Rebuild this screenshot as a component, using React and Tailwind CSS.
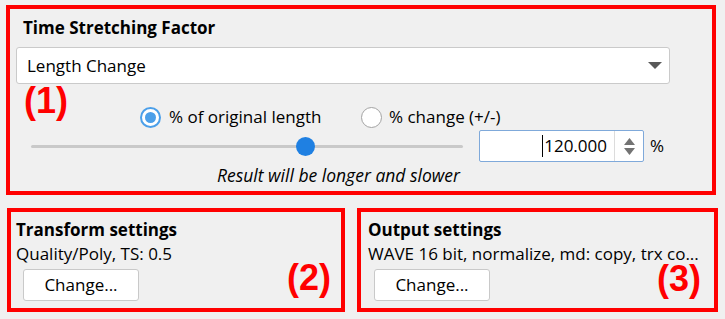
import React from 'react';

const font = { fontFamily: '"Open Sans", "Noto Sans", sans-serif' };

const Radio = ({ checked }) =>
  checked ? (
    <span className="w-[21px] h-[21px] rounded-full border-2 border-[#4b9fe9] bg-white flex items-center justify-center shrink-0">
      <span className="w-[11px] h-[11px] rounded-full bg-[#4b9fe9]" />
    </span>
  ) : (
    <span className="w-[21px] h-[21px] rounded-full border border-[#a3a3a3] bg-white shrink-0" />
  );

const Note = ({ children, className }) => (
  <span className={`absolute font-['Liberation_Sans',sans-serif] font-bold text-[36px] leading-none text-[#ff0000] ${className}`}>
    {children}
  </span>
);

const ChangeButton = ({ className }) => (
  <button className={`w-[116px] h-[32px] bg-white border border-[#c9c9c9] rounded-[3px] text-[17px] text-black ${className}`}>
    Change...
  </button>
);

export default function App() {
  return (
    <div style={font} className="w-[725px] h-[319px] bg-[#f0f0f0] pt-[5px] text-black overflow-hidden">
      {/* (1) time stretching */}
      <div className="relative ml-[6px] w-[710px] h-[190px] border-4 border-[#ff0000] flex flex-col">
        <div className="pt-[8px] pl-[13px] text-[17px] leading-[22px] font-bold">Time Stretching Factor</div>
        <div className="mt-[8px] ml-[6px] w-[654px] h-[37px] bg-white border border-[#cacaca] rounded-[3px] flex items-center justify-between pl-[10px] pr-[7px]">
          <span className="text-[17px]">Length Change</span>
          <svg width="14" height="7" viewBox="0 0 14 7">
            <path d="M0 0h14L7 7z" fill="#595959" />
          </svg>
        </div>
        <div className="mt-[22px] ml-[130px] flex items-center h-[22px] text-[17px]">
          <label className="w-[221px] flex items-center gap-[8px]">
            <Radio checked />
            <span>% of original length</span>
          </label>
          <label className="flex items-center gap-[7px]">
            <Radio />
            <span>% change (+/-)</span>
          </label>
        </div>
        <div className="mt-[2px] ml-[21px] flex items-center h-[32px]">
          <div className="relative w-[432px] h-[3px] bg-[#c9c9c9] rounded-full">
            <span className="absolute left-[265px] top-[-8px] w-[19px] h-[19px] rounded-full bg-[#1f80e2]" />
          </div>
          <div className="ml-[16px] w-[165px] h-[32px] bg-white border border-[#7fa9da] rounded-[2px] flex">
            <div className="flex-1 flex items-center justify-end pr-[7px] text-[17px]">
              <span className="w-px h-[22px] bg-black mr-px" />
              <span>120.000</span>
            </div>
            <div className="w-[29px] border-l border-[#dcdcdc] flex flex-col items-center justify-center gap-[3px]">
              <svg width="11" height="7" viewBox="0 0 11 7">
                <path d="M0 7L5.5 0L11 7z" fill="#737373" />
              </svg>
              <svg width="11" height="7" viewBox="0 0 11 7">
                <path d="M0 0h11L5.5 7z" fill="#737373" />
              </svg>
            </div>
          </div>
          <span className="ml-[6px] text-[17px]">%</span>
        </div>
        <div className="mt-[3px] pl-[207px] text-[17.5px] leading-[20px] italic">Result will be longer and slower</div>
        <Note className="left-[14px] top-[74px]">(1)</Note>
      </div>

      <div className="mt-[13px] ml-[7px] flex gap-[12px]">
        {/* (2) transform */}
        <div className="relative w-[338px] h-[104px] border-4 border-[#ff0000] flex flex-col">
          <div className="pt-[7px] pl-[5px] text-[17px] leading-[22px] font-bold">Transform settings</div>
          <div className="mt-[2px] pl-[5px] text-[17px] leading-[22px]">Quality/Poly, TS: 0.5</div>
          <ChangeButton className="mt-[4px] ml-[12px]" />
          <Note className="left-[276px] top-[48px]">(2)</Note>
        </div>
        {/* (3) output */}
        <div className="relative w-[361px] h-[104px] border-4 border-[#ff0000] flex flex-col">
          <div className="pt-[7px] pl-[7px] text-[17px] leading-[22px] font-bold">Output settings</div>
          <div className="mt-[2px] pl-[7px] text-[17px] leading-[22px] whitespace-nowrap">WAVE 16 bit, normalize, md: copy, trx co...</div>
          <ChangeButton className="mt-[4px] ml-[13px]" />
          <Note className="left-[296px] top-[49px]">(3)</Note>
        </div>
      </div>
    </div>
  );
}
